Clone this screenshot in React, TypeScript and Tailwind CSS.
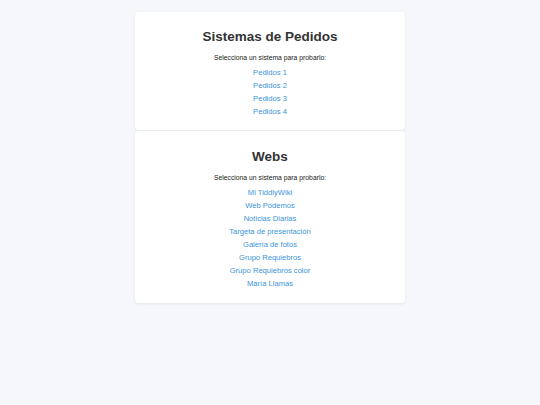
const sections = [
  {
    title: "Sistemas de Pedidos",
    pad: "pt-[16.5px] pb-[12px]",
    links: ["Pedidos 1", "Pedidos 2", "Pedidos 3", "Pedidos 4"],
  },
  {
    title: "Webs",
    pad: "pt-[17.5px] pb-[13px]",
    links: [
      "Mi TiddlyWiki",
      "Web Podemos",
      "Noticias Diarias",
      "Targeta de presentación",
      "Galería de fotos",
      "Grupo Requiebros",
      "Grupo Requiebros color",
      "María Llamas",
    ],
  },
];

export default function App() {
  return (
    <div className="min-h-[405px] bg-[#f5f7fa] pt-[12px] font-['Liberation_Sans',Arial,sans-serif]">
      <div className="w-[270px] mx-auto flex flex-col gap-px">
        {sections.map((s) => (
          <div
            key={s.title}
            className={`bg-white rounded-[4px] shadow-[0_1px_3px_rgba(0,0,0,0.08)] text-center ${s.pad}`}
          >
            <h2 className="text-[13.5px] leading-[16px] font-bold text-[#333333]">{s.title}</h2>
            <p className="mt-[8.5px] text-[6.8px] leading-[9px] text-[#222222]">
              Selecciona un sistema para probarlo:
            </p>
            <ul className="mt-[4px]">
              {s.links.map((l) => (
                <li key={l} className="text-[7.6px] leading-[13px]">
                  <a href="#" className="text-[#3a95db]">
                    {l}
                  </a>
                </li>
              ))}
            </ul>
          </div>
        ))}
      </div>
    </div>
  );
}
